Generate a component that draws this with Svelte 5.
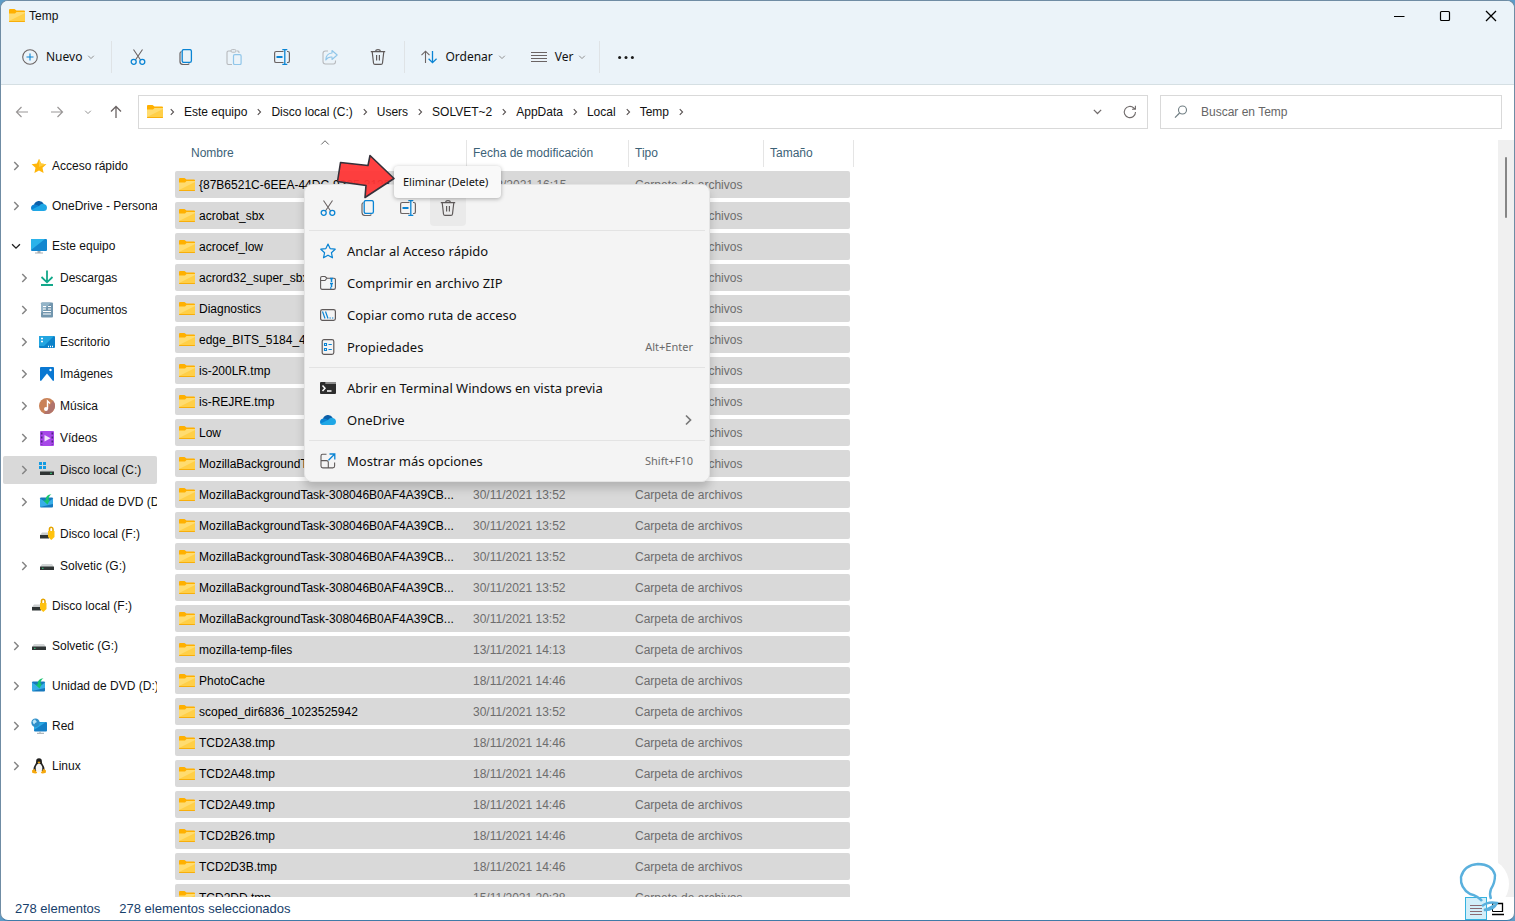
<script lang="ts">
  type Place = {
    label: string;
    icon: string;
    open?: boolean;
    leaf?: boolean;
    selected?: boolean;
    children?: Place[];
  };

  type Entry = { name: string; date: string };

  const crumbs = ['Este equipo', 'Disco local (C:)', 'Users', 'SOLVET~2', 'AppData', 'Local', 'Temp'];

  const places: Place[] = [
    { label: 'Acceso rápido', icon: 'star' },
    { label: 'OneDrive - Personal', icon: 'cloud' },
    {
      label: 'Este equipo',
      icon: 'pc',
      open: true,
      children: [
        { label: 'Descargas', icon: 'download' },
        { label: 'Documentos', icon: 'doc' },
        { label: 'Escritorio', icon: 'desktop' },
        { label: 'Imágenes', icon: 'picture' },
        { label: 'Música', icon: 'music' },
        { label: 'Vídeos', icon: 'video' },
        { label: 'Disco local (C:)', icon: 'winDrive', selected: true },
        { label: 'Unidad de DVD (D:)', icon: 'dvd' },
        { label: 'Disco local (F:)', icon: 'lockDrive', leaf: true },
        { label: 'Solvetic (G:)', icon: 'drive' },
      ],
    },
    { label: 'Disco local (F:)', icon: 'lockDrive', leaf: true },
    { label: 'Solvetic (G:)', icon: 'drive' },
    { label: 'Unidad de DVD (D:)', icon: 'dvd' },
    { label: 'Red', icon: 'network' },
    { label: 'Linux', icon: 'linux' },
  ];

  const mozilla = 'MozillaBackgroundTask-308046B0AF4A39CB...';
  const entries: Entry[] = [
    { name: '{87B6521C-6EEA-44DC-9335-3135...', date: '01/12/2021 16:15' },
    { name: 'acrobat_sbx', date: '30/11/2021 13:52' },
    { name: 'acrocef_low', date: '30/11/2021 13:52' },
    { name: 'acrord32_super_sbx', date: '30/11/2021 13:52' },
    { name: 'Diagnostics', date: '30/11/2021 13:52' },
    { name: 'edge_BITS_5184_4', date: '30/11/2021 13:52' },
    { name: 'is-200LR.tmp', date: '30/11/2021 13:52' },
    { name: 'is-REJRE.tmp', date: '30/11/2021 13:52' },
    { name: 'Low', date: '30/11/2021 13:52' },
    ...Array.from({ length: 6 }, () => ({ name: mozilla, date: '30/11/2021 13:52' })),
    { name: 'mozilla-temp-files', date: '13/11/2021 14:13' },
    { name: 'PhotoCache', date: '18/11/2021 14:46' },
    { name: 'scoped_dir6836_1023525942', date: '30/11/2021 13:52' },
    { name: 'TCD2A38.tmp', date: '18/11/2021 14:46' },
    { name: 'TCD2A48.tmp', date: '18/11/2021 14:46' },
    { name: 'TCD2A49.tmp', date: '18/11/2021 14:46' },
    { name: 'TCD2B26.tmp', date: '18/11/2021 14:46' },
    { name: 'TCD2D3B.tmp', date: '18/11/2021 14:46' },
    { name: 'TCD2DD.tmp', date: '15/11/2021 20:38' },
  ];

  const tools = [
    { icon: 'cut', label: 'Cortar' },
    { icon: 'copy', label: 'Copiar' },
    { icon: 'paste', label: 'Pegar', off: true },
    { icon: 'rename', label: 'Cambiar nombre' },
    { icon: 'share', label: 'Compartir', off: true },
    { icon: 'trash', label: 'Eliminar' },
  ];

  const quick = [
    { icon: 'cut', label: 'Cortar' },
    { icon: 'copy', label: 'Copiar' },
    { icon: 'rename', label: 'Cambiar nombre' },
    { icon: 'trash', label: 'Eliminar' },
  ];

  const menuGroups = [
    [
      { icon: 'pin', label: 'Anclar al Acceso rápido' },
      { icon: 'zip', label: 'Comprimir en archivo ZIP' },
      { icon: 'path', label: 'Copiar como ruta de acceso' },
      { icon: 'props', label: 'Propiedades', keys: 'Alt+Enter' },
    ],
    [
      { icon: 'terminal', label: 'Abrir en Terminal Windows en vista previa' },
      { icon: 'cloud', label: 'OneDrive', sub: true },
    ],
    [{ icon: 'more', label: 'Mostrar más opciones', keys: 'Shift+F10' }],
  ];

  let query = $state('');
</script>

{#snippet icon(name: string, size = 16)}
  <svg class="icon" width={size} height={size} viewBox="0 0 16 16" fill="none" aria-hidden="true">
    {#if name === 'folder'}
      <path d="M0 2Q0 1 1 1H5.5L7.5 2.5H15Q16 2.5 16 3.5V13Q16 14 15 14H1Q0 14 0 13Z" fill="#ffb000" />
      <path d="M0 5.5H6L7.5 4H16V13H0Z" fill="#ffdc70" />
      <path d="M0 13L16 5V13Z" fill="#ffcf48" />
      <path d="M0 13H16Q16 14 15 14H1Q0 14 0 13Z" fill="#f8ae0a" />
    {:else if name === 'cut'}
      <path d="M3.5 .5L10.6 11M12.5 .5L5.4 11" stroke="#6b6464" stroke-width="1.1" />
      <circle cx="3.7" cy="12.8" r="2.5" stroke="#0a84d4" stroke-width="1.3" />
      <circle cx="12.3" cy="12.8" r="2.5" stroke="#0a84d4" stroke-width="1.3" />
    {:else if name === 'copy'}
      <path d="M3.5 2.5Q2 3 2 4.5V12.5Q2 15.5 5 15.5H9.5Q10.8 15.5 11.3 14.5" stroke="#6b6464" stroke-width="1.2" />
      <rect x="4.2" y=".6" width="9.2" height="12.8" rx="1.6" stroke="#0a84d4" stroke-width="1.3" />
    {:else if name === 'paste'}
      <path d="M5 2H2.5Q1 2 1 3.5V14Q1 15.5 2.5 15.5H6M11 2H12Q13 2 13 3.5V4" stroke="#6b6464" stroke-width="1.1" />
      <rect x="5" y=".6" width="5" height="2.6" rx="1.2" stroke="#6b6464" />
      <rect x="7.5" y="5.6" width="7.6" height="9.9" rx="1.3" stroke="#0a84d4" stroke-width="1.2" />
    {:else if name === 'rename'}
      <path d="M9.5 2.5H2.2Q.6 2.5.6 4.1V11.9Q.6 13.5 2.2 13.5H9.5M13 2.5H13.8Q15.4 2.5 15.4 4.1V11.9Q15.4 13.5 13.8 13.5H13" stroke="#6b6464" stroke-width="1.2" />
      <path d="M2.5 8H8.5" stroke="#0a84d4" stroke-width="2" />
      <path d="M10.8 .6V15.4M8.3 .6H13.3M8.3 15.4H13.3" stroke="#0a84d4" stroke-width="1.3" />
    {:else if name === 'share'}
      <path d="M6 2H3.5Q1 2 1 4.5V12.5Q1 15 3.5 15H11.5Q13.5 15 13.5 12.5V11.5" stroke="#6b6464" stroke-width="1.1" />
      <path d="M10 1.5L15.2 6L10 10.5V8Q6 7.6 3.8 11Q4 4.5 10 4Z" stroke="#0a84d4" stroke-width="1.1" stroke-linejoin="round" />
    {:else if name === 'trash'}
      <path d="M.8 2.6H15.2M5.5 2.4Q5.8.6 8 .6T10.5 2.4M2.2 2.8L3.5 14Q3.7 15.4 5 15.4H11Q12.3 15.4 12.5 14L13.8 2.8M6.6 6V11.5M9.4 6V11.5" stroke="#5f5a5a" stroke-width="1.2" />
    {:else if name === 'new'}
      <circle cx="8" cy="8" r="7.3" stroke="#6b6464" stroke-width="1.1" />
      <path d="M8 4.5V11.5M4.5 8H11.5" stroke="#0a84d4" stroke-width="1.1" />
    {:else if name === 'sort'}
      <path d="M4.5 14V2.5M.5 6.2L4.5 2.2L8.5 6.2" stroke="#6b6464" stroke-width="1.1" />
      <path d="M11.5 2V13.5M7.6 9.8L11.5 13.7L15.6 9.8" stroke="#0a84d4" stroke-width="1.3" />
    {:else if name === 'view'}
      <path d="M0 3.5H16M0 6.5H16M0 9.5H16M0 12.5H16" stroke="#6b6464" />
    {:else if name === 'dots'}
      <circle cx="1.6" cy="8.5" r="1.5" fill="#1b1b1b" /><circle cx="8" cy="8.5" r="1.5" fill="#1b1b1b" /><circle cx="14.4" cy="8.5" r="1.5" fill="#1b1b1b" />
    {:else if name === 'left'}
      <path d="M14 8H2.5M7.5 3L2.5 8L7.5 13" stroke="#9a9797" stroke-width="1.2" />
    {:else if name === 'right'}
      <path d="M2 8H13.5M8.5 3L13.5 8L8.5 13" stroke="#9a9797" stroke-width="1.2" />
    {:else if name === 'up'}
      <path d="M8 14V2.5M3 7.5L8 2.5L13 7.5" stroke="#6b6464" stroke-width="1.3" />
    {:else if name === 'refresh'}
      <path d="M13.5 8A5.6 5.6 0 1 1 11.8 4L13.2 5M13.4 1.8V5.2H10" stroke="#716c6c" stroke-width="1.1" />
    {:else if name === 'search'}
      <circle cx="9.5" cy="6" r="4" stroke="#6f7d82" stroke-width="1.1" />
      <path d="M6.6 9L2 13.7" stroke="#6f7d82" stroke-width="1.2" />
    {:else if name === 'chevDown'}
      <path d="M3.5 6L8 10.5L12.5 6" stroke="currentColor" stroke-width="1.5" />
    {:else if name === 'chevUp'}
      <path d="M3 10L8 5L13 10" stroke="currentColor" stroke-width="1.3" />
    {:else if name === 'chevRight'}
      <path d="M6 3.5L10.5 8L6 12.5" stroke="currentColor" stroke-width="1.7" />
    {:else if name === 'min'}
      <path d="M3 8.5H13.5" stroke="#000" stroke-width="1.2" />
    {:else if name === 'max'}
      <rect x="3.5" y="3.5" width="9" height="9" rx="1" stroke="#000" stroke-width="1.2" />
    {:else if name === 'close'}
      <path d="M3 3L13 13M13 3L3 13" stroke="#000" stroke-width="1.3" />
    {:else if name === 'star'}
      <path d="M8 .8L10.1 5.6L15.4 6.2L11.5 9.8L12.6 15L8 12.4L3.4 15L4.5 9.8L.6 6.2L5.9 5.6Z" fill="#ffb60a" />
      <path d="M8 .8L10.1 5.6L15.4 6.2L8 9Z" fill="#ffcb3a" />
    {:else if name === 'cloud'}
      <path d="M3 6.8A5.2 5.2 0 0 1 12.6 5.6L9 10Z" fill="#0c5fa8" />
      <path d="M3.6 13Q0 13 0 9.8Q.2 6.6 3.6 6.4Q6 6.3 8 8L13 11.5Q9 13 3.6 13Z" fill="#0a84d4" />
      <path d="M8 7.9Q10 5.4 12.8 5.9Q16 6.6 16 9.7Q15.8 13 12.8 13H3.6Q1.8 13 .8 11.6Z" fill="#1fa7e6" />
    {:else if name === 'pc'}
      <rect x="0" y="1" width="16" height="12" rx="1" fill="#1387cf" />
      <path d="M0 12V2Q0 1 1 1H14Z" fill="#2bb3ea" />
      <path d="M6.5 13H9.5V14.5H12V15.5H4V14.5H6.5Z" fill="#a5adb3" />
    {:else if name === 'download'}
      <path d="M8 .5V12M2.5 7L8 12.3L13.5 7M2 15H14" stroke="#12a88a" stroke-width="1.8" />
    {:else if name === 'doc'}
      <rect x="2" y=".5" width="12" height="15" rx="1" fill="#7296ae" />
      <path d="M3 .5H12L2 11V1.5Z" fill="#93b4c8" />
      <path d="M4 4.5H7M4 7H7M9 4.5H12M9 7H12M4 9.5H12M4 12H12" stroke="#fff" stroke-width="1.2" />
    {:else if name === 'desktop'}
      <rect x="0" y="2" width="16" height="12" rx="1" fill="#0b82ca" />
      <path d="M0 12V3Q0 2 1 2H15L5 12Z" fill="#22a5e0" />
      <path d="M2 4.5H4M2 7.5H4M9 12.5H10M11 12.5H12M13 12.5H14" stroke="#fff" stroke-width="1.5" />
    {:else if name === 'picture'}
      <rect x="1" y="1" width="14" height="14" rx="1" fill="#0a78d2" />
      <path d="M2 15L8 7.5L14 15Z" fill="#fff" />
      <circle cx="11.5" cy="4" r="1.2" fill="#fff" />
    {:else if name === 'music'}
      <circle cx="8" cy="8" r="8" fill="#c98258" />
      <path d="M14 2.8A8 8 0 0 1 5 15.4Z" fill="#b0736c" />
      <path d="M8.5 11V3L11 5.5" stroke="#fff" stroke-width="1.4" /><circle cx="7" cy="11" r="2" fill="#fff" />
    {:else if name === 'video'}
      <rect x="1" y="1" width="14" height="15" rx="1" fill="#a748e8" />
      <path d="M2.7 2.5V15M13.3 2.5V15" stroke="#4d2480" stroke-width="1.6" stroke-dasharray="2 2" />
      <path d="M5.5 5L11.5 8.3L5.5 11.6Z" fill="#f1e6fb" />
    {:else if name === 'winDrive'}
      <path d="M0 0H3V3H0ZM4 0H7V3H4ZM0 4H3V7H0ZM4 4H7V7H4Z" fill="#139be2" />
      <path d="M3 8H13L15 10H1Z" fill="#c9cccd" /><rect x="1" y="9.5" width="14" height="3.5" fill="#2f3434" /><path d="M11 11.3H13" stroke="#35d07f" />
    {:else if name === 'drive'}
      <path d="M3 6H13L15 9H1Z" fill="#d3d6d7" /><rect x="1" y="8.5" width="14" height="3.5" rx=".5" fill="#2f3434" /><path d="M3 10.3H4.5" stroke="#35d07f" />
    {:else if name === 'lockDrive'}
      <path d="M3 6.5H11V9H1Z" fill="#cbcecf" /><rect x="1" y="9" width="9" height="3.5" fill="#2f3434" />
      <path d="M10.5 5V3Q10.5 1.2 12.2 1.2T14 3V5" stroke="#e5a400" stroke-width="1.6" /><path d="M9 5H15.5V11L12.3 14L9 11Z" fill="#ffc20e" />
    {:else if name === 'dvd'}
      <rect x="1" y="3.5" width="13" height="10" rx="1" fill="#1678bd" /><path d="M1 4.5L8 9L14 4.5V10L1 13Z" fill="#38aee8" />
      <path d="M4 6.3L8.5 10.5L11 5.5L9.5 6Q9.5 2 12.5 .3Q6.5 .5 6.5 6.8Z" fill="#17c46f" />
    {:else if name === 'network'}
      <rect x="3" y="4" width="13" height="9.5" rx="1" fill="#147fc6" /><path d="M3 12V5L15 4Z" fill="#2cabe5" />
      <circle cx="4.5" cy="4.7" r="4.2" fill="#2f8fc9" /><path d="M1.5 3.5Q4 0 5 3Q7 4 4 5Q3 8 1.5 3.5Z" fill="#b7e4f8" /><path d="M9 13.5V15M6 15.3H13" stroke="#9aa5ac" />
    {:else if name === 'linux'}
      <path d="M8 .3Q11 .3 10.9 3.7Q10.9 5.3 12.4 7.5Q14 10 13.3 13H2.7Q2 10 3.6 7.5Q5.1 5.3 5.1 3.7Q5 .3 8 .3Z" fill="#20201f" />
      <path d="M8 5.2Q10.4 6 11.3 9Q11.9 12.5 9.8 14.3H6.2Q4.1 12.5 4.7 9Q5.6 6 8 5.2Z" fill="#f6f6f6" />
      <path d="M6.4 4.2L8 3.5L9.6 4.2L8 5.5ZM1 12.5L3.3 10.8L6.2 14.8Q5 16.4 1.2 14.8ZM15 12.5L12.7 10.8L9.8 14.8Q11 16.4 14.8 14.8Z" fill="#f6a80d" />
    {:else if name === 'pin'}
      <path d="M8 1L10.1 5.6L15.2 6.2L11.4 9.7L12.5 14.8L8 12.2L3.5 14.8L4.6 9.7L.8 6.2L5.9 5.6Z" stroke="#0a84d4" stroke-width="1.2" stroke-linejoin="round" />
    {:else if name === 'zip'}
      <path d="M.6 12.5V3Q.6 1.5 2 1.5H5L7 3.2H14Q15.4 3.2 15.4 4.6V12.7Q15.4 14.4 13.8 14.4H2.2Q.6 14.4.6 12.5ZM.6 5.5H5L7 3.2" stroke="#5f5a5a" stroke-width="1.1" />
      <path d="M10 3.5H13M11.5 4V7M10 8.5H13M11.5 9V12M10 13H11.5" stroke="#0a84d4" stroke-width="1.5" />
    {:else if name === 'path'}
      <rect x=".6" y="2.6" width="14.8" height="10.8" rx="1.8" stroke="#5f5a5a" stroke-width="1.2" />
      <path d="M2.5 4.5L5 11.5M5.5 4.5L8 11.5M9.5 11H10.8M12 11H13.3" stroke="#0a84d4" stroke-width="1.2" />
    {:else if name === 'props'}
      <rect x="2.2" y=".6" width="11.6" height="14.8" rx="1.8" stroke="#5f5a5a" stroke-width="1.2" />
      <path d="M4.5 4.5H6.5V6.5H4.5ZM4.5 9.5H6.5V11.5H4.5ZM8.5 5.5H11.8M8.5 10.5H11.8" stroke="#0a84d4" stroke-width="1.1" />
    {:else if name === 'terminal'}
      <path d="M0 3Q0 2 1 2H15Q16 2 16 3V13Q16 14 15 14H1Q0 14 0 13Z" fill="#2d2d2d" /><path d="M5.3 2H16V4H5.3Z" fill="#8b8b8b" />
      <path d="M2.5 5.5L5 8.2L2.5 11M7 11H11.5" stroke="#fff" stroke-width="1.5" />
    {:else if name === 'more'}
      <path d="M6.5 1.3H2.6Q1 1.3 1 2.9V13Q1 14.9 2.8 14.9H12.8Q14.6 14.9 14.6 13V9.5M1 7.6H6.5Q8.3 7.6 8.3 9.3V14.9" stroke="#5f5a5a" stroke-width="1.1" />
      <path d="M8.5 7.2L14.5 1.2M9.5 1H14.8V6.5" stroke="#0a84d4" stroke-width="1.3" />
    {/if}
  </svg>
{/snippet}

{#snippet place(item: Place)}
  <li>
    <a href="#{item.icon}" class:selected={item.selected} class="place">
      <span class="twisty" class:open={item.open}>
        {#if !item.leaf}{@render icon(item.open ? 'chevDown' : 'chevRight', 14)}{/if}
      </span>
      {@render icon(item.icon)}
      <span class="place-label">{item.label}</span>
    </a>
    {#if item.children}
      <ul>
        {#each item.children as child}{@render place(child)}{/each}
      </ul>
    {/if}
  </li>
{/snippet}

<div class="window">
  <header class="top">
    <div class="titlebar">
      {@render icon('folder')}
      <h1>Temp</h1>
      <div class="window-buttons">
        <button aria-label="Minimizar">{@render icon('min')}</button>
        <button aria-label="Maximizar">{@render icon('max')}</button>
        <button aria-label="Cerrar">{@render icon('close')}</button>
      </div>
    </div>
    <div class="toolbar">
      <button class="wide first">{@render icon('new')}<span>Nuevo</span>{@render icon('chevDown', 10)}</button>
      <span class="sep"></span>
      {#each tools as t}
        <button class="tool" aria-label={t.label} disabled={t.off}>{@render icon(t.icon)}</button>
      {/each}
      <span class="sep"></span>
      <button class="wide">{@render icon('sort')}<span>Ordenar</span>{@render icon('chevDown', 10)}</button>
      <button class="wide">{@render icon('view')}<span>Ver</span>{@render icon('chevDown', 10)}</button>
      <span class="sep"></span>
      <button class="tool" aria-label="Ver más">{@render icon('dots')}</button>
    </div>
  </header>

  <div class="navbar">
    <div class="history">
      <button aria-label="Atrás">{@render icon('left')}</button>
      <button aria-label="Adelante">{@render icon('right')}</button>
      <button class="recent" aria-label="Recientes">{@render icon('chevDown', 10)}</button>
      <button aria-label="Subir">{@render icon('up')}</button>
    </div>
    <nav class="address" aria-label="Ruta">
      {@render icon('folder')}
      <span class="crumb-sep first-sep">{@render icon('chevRight', 10)}</span>
      {#each crumbs as c}
        <a href="#{c}">{c}</a>
        <span class="crumb-sep">{@render icon('chevRight', 10)}</span>
      {/each}
      <button class="expand" aria-label="Ubicaciones anteriores">{@render icon('chevDown', 13)}</button>
      <button aria-label="Actualizar">{@render icon('refresh')}</button>
    </nav>
    <label class="search">
      {@render icon('search')}
      <input type="text" placeholder="Buscar en Temp" aria-label="Buscar en Temp" bind:value={query} />
    </label>
  </div>

  <main>
    <aside>
      <ul class="tree">
        {#each places as p}{@render place(p)}{/each}
      </ul>
    </aside>
    <section class="files">
      <span class="sort-mark">{@render icon('chevUp', 12)}</span>
      <table>
        <thead>
          <tr>
            <th>Nombre</th>
            <th>Fecha de modificación</th>
            <th>Tipo</th>
            <th>Tamaño</th>
          </tr>
        </thead>
        <tbody>
          {#each entries as e}
            <tr>
              <td class="name">{@render icon('folder')}<span>{e.name}</span></td>
              <td>{e.date}</td>
              <td>Carpeta de archivos</td>
              <td></td>
            </tr>
          {/each}
        </tbody>
      </table>
    </section>
    <div class="scrollbar"><div class="thumb"></div></div>
  </main>

  <div class="halo"></div>
  <footer>
    <span>278 elementos</span>
    <span>278 elementos seleccionados</span>
    <div class="modes">
      <button class="active" aria-label="Detalles">
        <svg width="14" height="14" viewBox="0 0 14 14" stroke="#8a6a72"><path d="M1 3.5H13M1 6.5H13M1 9.5H13M1 12.5H13" /></svg>
      </button>
      <button aria-label="Iconos grandes">
        <svg width="14" height="14" viewBox="0 0 14 14" fill="none" stroke="#000"><path d="M1.5 1.5V9.5H12" /><path d="M1 1.5H11.5V10M1 12.5H13" stroke-width="1.3" /></svg>
      </button>
    </div>
  </footer>

  <div class="menu" role="menu">
    <div class="quick">
      {#each quick as q}
        <button aria-label={q.label} class:hover={q.icon === 'trash'}>{@render icon(q.icon)}</button>
      {/each}
    </div>
    {#each menuGroups as group}
      <hr />
      {#each group as m}
        <button class="menu-item" role="menuitem">
          {@render icon(m.icon)}
          <span>{m.label}</span>
          {#if m.keys}<kbd>{m.keys}</kbd>{/if}
          {#if m.sub}<span class="sub">{@render icon('chevRight', 16)}</span>{/if}
        </button>
      {/each}
    {/each}
  </div>

  <div class="tooltip" role="tooltip">Eliminar (Delete)</div>
  <svg class="arrow" width="60" height="46" viewBox="0 0 60 46" aria-hidden="true">
    <path d="M5.5 8.5L33 11.5L35 1.5L59 24.5L30 43.5L31 31.5L2.5 27.5Z" fill="#ff3636" fill-opacity=".95" stroke="#35313a" stroke-width="1.6" stroke-linejoin="round" />
  </svg>

  <svg class="mark" width="54" height="60" viewBox="0 0 54 60" fill="none" aria-hidden="true">
    <path d="M26 41Q22 36 14 34Q4 28 5 17Q8 5 22 4Q36 4 39 15Q39 23 35 29Q33 34 35 39" stroke="#5ab0dd" stroke-width="2.4" />
    <path d="M26 46Q32 41 41 43Q37 51 28 50Q35 48 38 45" stroke="#5ab0dd" stroke-width="2.4" />
  </svg>
</div>

<style>
  :global(body) {
    margin: 0;
    background: #5c9cc8;
  }
  .window {
    position: relative;
    display: flex;
    flex-direction: column;
    box-sizing: border-box;
    height: 100vh;
    overflow: hidden;
    border: 1px solid #6f8ca4;
    border-bottom-color: #3f7ba8;
    border-radius: 8px;
    background: #fff;
    color: #111;
    font: 12px/16px 'Liberation Sans', Arial, sans-serif;
  }
  button {
    display: flex;
    align-items: center;
    justify-content: center;
    padding: 0;
    border: 0;
    background: none;
    color: inherit;
    font: inherit;
  }
  a {
    color: inherit;
    text-decoration: none;
  }
  ul {
    margin: 0;
    padding: 0;
    list-style: none;
  }
  .icon {
    display: block;
    flex: none;
  }

  .top {
    background: #ebf3f9;
    border-bottom: 1px solid #d5dfe3;
  }
  .titlebar {
    display: flex;
    align-items: center;
    gap: 4px;
    height: 29px;
    padding-left: 8px;
  }
  h1 {
    margin: 0;
    font-size: 12px;
    font-weight: 400;
  }
  .window-buttons {
    display: flex;
    margin-left: auto;
  }
  .window-buttons button {
    width: 46px;
    height: 28px;
  }
  .toolbar {
    display: flex;
    align-items: center;
    height: 54px;
    font: 12px/16px 'Noto Sans', sans-serif;
  }
  .sep {
    width: 1px;
    height: 32px;
    margin: 0 2px;
    background: #dfe3e6;
  }
  .tool {
    width: 48px;
    height: 32px;
  }
  .tool:disabled {
    opacity: 0.4;
  }
  .wide {
    gap: 8px;
    height: 32px;
    padding: 0 10px 0 14px;
  }
  .wide .icon:last-child {
    margin-left: -4px;
    color: #8a8a8a;
  }
  .wide.first {
    padding: 0 13px 0 21px;
  }

  .navbar {
    display: flex;
    align-items: center;
    box-sizing: border-box;
    height: 55px;
    padding: 0 12px 2px 0;
  }
  .history {
    display: flex;
    align-items: center;
    gap: 19px;
    width: 137px;
    box-sizing: border-box;
    padding-left: 13px;
    color: #8a8a8a;
  }
  .history .recent {
    width: 8px;
    margin-right: -3px;
  }
  .address,
  .search {
    display: flex;
    align-items: center;
    height: 34px;
    box-sizing: border-box;
    border: 1px solid #d9d9d9;
  }
  .address {
    flex: 1;
    padding: 0 9px 0 8px;
  }
  .crumb-sep {
    margin: 0 7px;
    color: #554f4f;
  }
  .first-sep {
    margin-left: 4px;
  }
  .address a {
    white-space: nowrap;
  }
  .expand {
    margin-left: auto;
    margin-right: 18px;
    color: #716c6c;
  }
  .search {
    gap: 12px;
    width: 342px;
    margin-left: 12px;
    padding: 0 12px;
  }
  .search input {
    flex: 1;
    min-width: 0;
    padding: 0;
    border: 0;
    outline: 0;
    background: none;
    font: inherit;
  }
  .search input::placeholder {
    color: #666;
    opacity: 1;
  }

  main {
    display: flex;
    flex: 1;
    min-height: 0;
  }
  aside {
    width: 154px;
    padding: 12px 0 0 2px;
    overflow: hidden;
  }
  .tree > li {
    margin-bottom: 12px;
  }
  .place {
    display: flex;
    align-items: center;
    height: 28px;
    padding-left: 6px;
    border-radius: 2px;
    overflow: hidden;
    white-space: nowrap;
  }
  .place.selected {
    background: #d9d9d9;
  }
  .tree ul .place {
    margin-top: 4px;
    padding-left: 14px;
  }
  .twisty {
    width: 14px;
    margin-right: 8px;
    color: #858585;
  }
  .twisty.open {
    color: #222;
  }
  .place-label {
    margin-left: 5px;
  }

  .files {
    position: relative;
    flex: 1;
    min-width: 0;
    padding-left: 18px;
    overflow: hidden;
  }
  .sort-mark {
    position: absolute;
    top: -3px;
    left: 162px;
    color: #666;
  }
  table,
  thead,
  tbody {
    display: block;
  }
  tr {
    display: grid;
    grid-template-columns: 291px 162px 135px 87px;
    width: 675px;
    height: 27px;
    margin-bottom: 4px;
    align-items: center;
  }
  thead tr {
    grid-template-columns: 291px 162px 135px 91px;
    width: 679px;
    align-items: stretch;
  }
  th {
    box-sizing: border-box;
    padding: 5px 6px 0;
    border-left: 1px solid #e5e5e5;
    color: #3c6277;
    font-weight: 400;
    text-align: left;
  }
  th:first-child {
    padding-left: 16px;
    border-left: 0;
  }
  th:last-child {
    border-right: 1px solid #e5e5e5;
  }
  tbody tr {
    border-radius: 2px;
    background: #d9d9d9;
  }
  td {
    padding: 0 7px;
    color: #6d6d6d;
    white-space: nowrap;
  }
  td.name {
    display: flex;
    align-items: center;
    gap: 4px;
    padding: 0 0 0 4px;
    color: #000;
  }
  .scrollbar {
    width: 16px;
    padding-top: 17px;
    box-sizing: border-box;
    background: #f0f0f0;
  }
  .thumb {
    width: 2px;
    height: 61px;
    margin-left: 7px;
    border-radius: 1px;
    background: #868686;
  }

  footer {
    position: relative;
    display: flex;
    align-items: center;
    gap: 19px;
    height: 23px;
    padding-left: 14px;
    color: #17406b;
    font-size: 13px;
  }
  .modes {
    display: flex;
    margin-left: auto;
    margin-right: 5px;
  }
  .modes button {
    width: 22px;
    height: 23px;
  }
  .modes .active {
    box-sizing: border-box;
    border: 1px solid #35b2df;
    background: #d2eef9;
  }

  .menu {
    position: absolute;
    top: 183px;
    left: 303px;
    width: 406px;
    box-sizing: border-box;
    padding: 5px 4px 4px;
    border: 1px solid #e4e4e4;
    border-radius: 8px;
    background: #f4f4f4;
    box-shadow: 0 6px 10px rgba(0, 0, 0, 0.18);
    font: 13px/18px 'Noto Sans', sans-serif;
  }
  .quick {
    display: flex;
    gap: 4px;
    padding-left: 1px;
  }
  .quick button {
    width: 36px;
    height: 36px;
    border-radius: 4px;
  }
  .quick .hover {
    background: #eaeaea;
  }
  hr {
    height: 1px;
    margin: 4px 0;
    border: 0;
    background: #e3e3e3;
  }
  .menu-item {
    justify-content: flex-start;
    width: 100%;
    height: 32px;
    padding: 0 12px 0 11px;
  }
  .menu-item > span:not(.sub) {
    margin-left: 11px;
  }
  kbd {
    margin-left: auto;
    color: #6b6b6b;
    font: 11px/16px 'Noto Sans', sans-serif;
  }
  .sub {
    margin-left: auto;
    margin-right: -3px;
    color: #777;
  }
  .tooltip {
    position: absolute;
    top: 165px;
    left: 393px;
    padding: 8px 13px 8px 9px;
    border-radius: 4px;
    background: #f9f9f9;
    box-shadow: 0 1px 4px rgba(0, 0, 0, 0.3);
    font: 11px/16px 'Noto Sans', sans-serif;
  }
  .arrow {
    position: absolute;
    top: 153px;
    left: 334px;
  }
  .halo {
    position: absolute;
    right: 5px;
    bottom: 10px;
    width: 52px;
    height: 52px;
    border-radius: 50%;
    background: #fff;
  }
  .mark {
    position: absolute;
    right: 4px;
    bottom: 0;
    pointer-events: none;
  }
</style>
